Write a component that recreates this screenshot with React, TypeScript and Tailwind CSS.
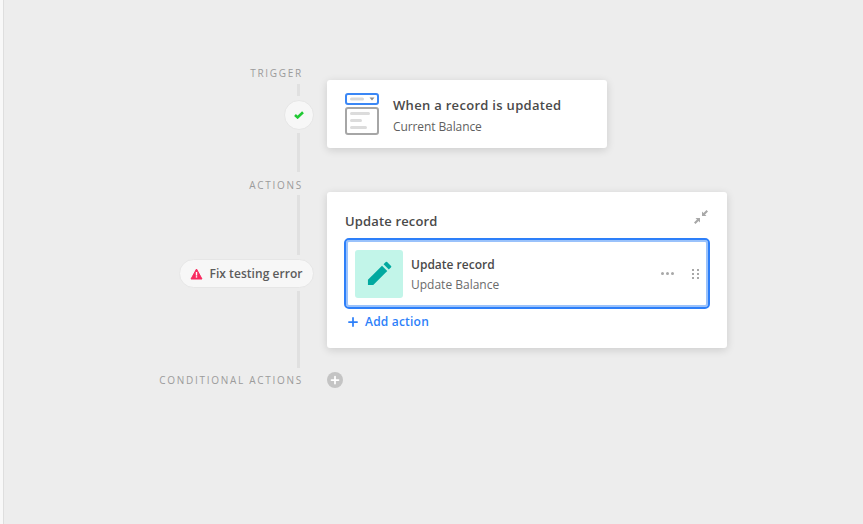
import { Plus } from "lucide-react";

const font = { fontFamily: '"Open Sans", "Noto Sans", sans-serif' };

function Label({ children }: { children: string }) {
  return (
    <p className="mr-[11px] h-[14px] text-[10px] leading-[14px] tracking-[1.72px] text-[#9b9b9b] whitespace-nowrap">
      {children}
    </p>
  );
}

function Rail({ height }: { height: number }) {
  return <div className="mr-[14px] w-[3px] bg-[#e0e0e0]" style={{ height }} />;
}

function TriggerIcon() {
  return (
    <svg width="34" height="42" viewBox="0 0 34 42" fill="none">
      <rect x="1" y="1" width="32" height="10" rx="2" fill="#fff" stroke="#3b87f5" strokeWidth="2" />
      <rect x="5" y="4.5" width="14" height="3" rx="1.5" fill="#d9d9d9" />
      <path d="M24.5 4.5h5l-2.5 3z" fill="#8e8e8e" />
      <rect x="1" y="15" width="32" height="26" rx="2" fill="#fff" stroke="#a6a6a6" strokeWidth="2" />
      <rect x="5" y="19" width="20" height="3" rx="1.5" fill="#dcdcdc" />
      <rect x="5" y="26" width="12" height="3" rx="1.5" fill="#dcdcdc" />
      <rect x="5" y="33" width="17" height="3" rx="1.5" fill="#dcdcdc" />
    </svg>
  );
}

export default function App() {
  return (
    <div className="flex h-[524px] w-[863px] overflow-hidden bg-white" style={font}>
      <div className="w-[3px] shrink-0 bg-[#f8f8f8]" />
      <div className="flex flex-1 flex-col border-l border-[#dedede] bg-[#ededed] pt-[66px] pl-[175px]">
        {/* trigger */}
        <div className="flex h-[112px] gap-[13px]">
          <div className="flex w-[135px] flex-col items-end">
            <Label>TRIGGER</Label>
            <div className="mt-[4px]"><Rail height={12} /></div>
            <div className="mt-[4px] flex h-[30px] w-[30px] items-center justify-center rounded-full border border-[#e6e6e6] bg-[#f7f7f7]">
              <svg width="10" height="8" viewBox="0 0 10 8" fill="none">
                <path d="M1 4 3.6 6.4 9 1.2" stroke="#20c933" strokeWidth="2.6" />
              </svg>
            </div>
            <div className="mt-[3px]"><Rail height={39} /></div>
          </div>
          <div className="mt-[14px] flex h-[68px] w-[280px] items-center rounded-[3px] bg-white pl-[18px] shadow-[0_2px_8px_rgba(0,0,0,0.14)]">
            <TriggerIcon />
            <div className="ml-[14px] pt-[4px]">
              <p className="text-[13px] leading-[20px] font-semibold tracking-[0.3px] text-[#4a4a4a]">When a record is updated</p>
              <p className="mt-[2px] text-[12px] leading-[20px] tracking-[-0.1px] text-[#5f5f5f]">Current Balance</p>
            </div>
          </div>
        </div>

        {/* actions */}
        <div className="flex h-[194px] gap-[13px]">
          <div className="flex w-[135px] flex-col items-end">
            <Label>ACTIONS</Label>
            <div className="mt-[3px]"><Rail height={60} /></div>
            <div className="mt-[4px] flex h-[29px] w-[135px] items-center justify-center gap-[6px] rounded-full border border-[#e6e6e6] bg-[#f7f7f7]">
              <svg width="13" height="12" viewBox="0 0 13 12">
                <path d="M6.5 1 12 11H1z" fill="#f82b60" stroke="#f82b60" strokeWidth="1" strokeLinejoin="round" />
                <rect x="5.8" y="4" width="1.4" height="3.6" fill="#fff" />
                <rect x="5.8" y="8.2" width="1.4" height="1.4" fill="#fff" />
              </svg>
              <span className="text-[12px] leading-[16px] font-semibold tracking-[0.05px] text-[#5c5c5c]">Fix testing error</span>
            </div>
            <div className="mt-[3px]"><Rail height={77} /></div>
          </div>
          <div className="mt-[14px] h-[156px] w-[400px] rounded-[3px] bg-white px-[18px] shadow-[0_2px_8px_rgba(0,0,0,0.14)]">
            <div className="flex h-[46px] items-center justify-between pt-[12px]">
              <p className="text-[13px] leading-[18px] font-semibold tracking-[0.15px] text-[#4a4a4a]">Update record</p>
              <svg className="-mt-[8px]" width="16" height="16" viewBox="0 0 16 16" fill="#a8a8a8">
                <path d="M9 7V2.5l1.5 1.5L13.5 1 15 2.5 12 5.5 13.5 7z" />
                <path d="M7 9v4.5L5.5 12l-3 3L1 13.5l3-3L2.5 9z" />
              </svg>
            </div>
            <div className="-mx-[1px] flex h-[71px] items-center rounded-[5px] border-2 border-[#2d7ff9] px-[9px] shadow-[inset_0_0_0_2px_#9ac2fb]">
              <div className="flex h-[48px] w-[48px] items-center justify-center rounded-[3px] bg-[#c2f5e9]">
                <svg width="25" height="25" viewBox="0 0 26 26" fill="#01a9a0">
                  <path d="M1 25v-5.5L15.6 4.9l5.5 5.5L6.5 25z" />
                  <path d="M17.2 3.3 19.5 1a1 1 0 0 1 1.4 0l4.1 4.1a1 1 0 0 1 0 1.4l-2.3 2.3z" />
                </svg>
              </div>
              <div className="ml-[8px] flex-1">
                <p className="mt-[2px] text-[12px] leading-[20px] font-semibold text-[#4a4a4a]">Update record</p>
                <p className="text-[12px] leading-[20px] text-[#6b6b6b]">Update Balance</p>
              </div>
              <div className="flex gap-[2px]">
                <span className="h-[3px] w-[3px] rounded-full bg-[#a8a8a8]" />
                <span className="h-[3px] w-[3px] rounded-full bg-[#a8a8a8]" />
                <span className="h-[3px] w-[3px] rounded-full bg-[#a8a8a8]" />
              </div>
              <div className="ml-[18px] grid grid-cols-2 gap-x-[3px] gap-y-[2px]">
                {[0, 1, 2, 3, 4, 5].map((i) => (
                  <span key={i} className="h-[2px] w-[2px] bg-[#a8a8a8]" />
                ))}
              </div>
            </div>
            <div className="mt-[3px] flex h-[20px] items-center gap-[5px] pl-[1px] text-[#2d7ff9]">
              <Plus size={14} strokeWidth={3} />
              <span className="text-[12px] leading-[16px] font-semibold tracking-[0.2px]">Add action</span>
            </div>
          </div>
        </div>

        {/* conditional actions */}
        <div className="flex h-[16px] items-center gap-[13px]">
          <div className="flex w-[135px] justify-end">
            <Label>CONDITIONAL ACTIONS</Label>
          </div>
          <div className="flex h-[16px] w-[16px] items-center justify-center rounded-full bg-[#c4c4c4] text-white">
            <Plus size={12} strokeWidth={3.5} />
          </div>
        </div>
      </div>
    </div>
  );
}
